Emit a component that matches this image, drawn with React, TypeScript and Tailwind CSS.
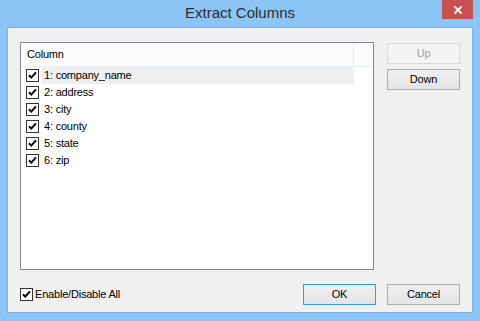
import React from "react";

const font = { fontFamily: '"Liberation Sans", Arial, sans-serif' };

function Check({ className = "" }: { className?: string }) {
  return (
    <div className={"w-[13px] h-[13px] border border-[#333333] bg-white flex items-center justify-center shrink-0 " + className}>
      <svg width="11" height="11" viewBox="0 0 11 11">
        <path d="M2 5.2 L4.3 7.6 L9 2.4" fill="none" stroke="#000" strokeWidth="2" />
      </svg>
    </div>
  );
}

const items = ["1: company_name", "2: address", "3: city", "4: county", "5: state", "6: zip"];

export default function App() {
  return (
    <div className="w-[480px] h-[321px] bg-[#8bc5f6] flex flex-col overflow-hidden" style={font}>
      <div className="h-[27px] relative flex items-center justify-center shrink-0">
        <span className="text-[15px] text-[#2b2b2b] mt-[-1px]" style={{ fontFamily: '"Liberation Sans", Arial, sans-serif' }}>Extract Columns</span>
        <div className="absolute top-0 right-[7px] w-[31px] h-[19px] bg-[#c75050] flex items-center justify-center">
          <svg width="10" height="10" viewBox="0 0 10 10">
            <path d="M1.5 1.5 L8.5 8.5 M8.5 1.5 L1.5 8.5" stroke="#fff" strokeWidth="1.8" />
          </svg>
        </div>
      </div>
      <div className="mx-[7px] mb-[8px] flex-1 border border-[#7fb2e0] bg-[#f0f0f0] flex flex-col px-[12px] pt-[14px]">
        <div className="flex">
          <div className="w-[354px] h-[228px] border border-[#828790] bg-white flex flex-col">
            <div className="h-[24px] bg-[#fcfcfc] border-b border-[#e5eef8] flex">
              <div className="w-[333px] border-r border-[#e3ebf7] flex items-center pl-[6px] text-[11px] text-black tracking-[-0.2px]">Column</div>
            </div>
            {items.map((t, i) => (
              <div key={t} className="h-[17px] flex items-center">
                <Check className="ml-[5px]" />
                <div className={"ml-[3px] w-[312px] h-[17px] flex items-center pl-[2px] text-[11px] text-black tracking-[-0.2px] " + (i === 0 ? "bg-[#efefef]" : "")}>{t}</div>
              </div>
            ))}
          </div>
          <div className="ml-[13px] mt-[1px] flex flex-col gap-[5px]">
            <div className="w-[73px] h-[21px] border border-[#d9d9d9] bg-[#f4f4f4] flex items-center justify-center text-[11px] text-[#a0a0a0] tracking-[-0.2px]">Up</div>
            <div className="w-[73px] h-[21px] border border-[#acacac] bg-gradient-to-b from-[#f0f0f0] to-[#e5e5e5] flex items-center justify-center text-[11px] text-black tracking-[-0.2px]">Down</div>
          </div>
        </div>
        <div className="flex items-center mt-[14px]">
          <Check />
          <span className="ml-[2px] text-[11px] text-black tracking-[-0.2px]">Enable/Disable All</span>
          <div className="ml-auto flex gap-[11px]">
            <div className="w-[73px] h-[21px] border border-[#3399ff] bg-gradient-to-b from-[#f0f0f0] to-[#e5e5e5] flex items-center justify-center text-[11px] text-black tracking-[-0.2px]">OK</div>
            <div className="w-[73px] h-[21px] border border-[#acacac] bg-gradient-to-b from-[#f0f0f0] to-[#e5e5e5] flex items-center justify-center text-[11px] text-black tracking-[-0.2px]">Cancel</div>
          </div>
        </div>
      </div>
    </div>
  );
}
